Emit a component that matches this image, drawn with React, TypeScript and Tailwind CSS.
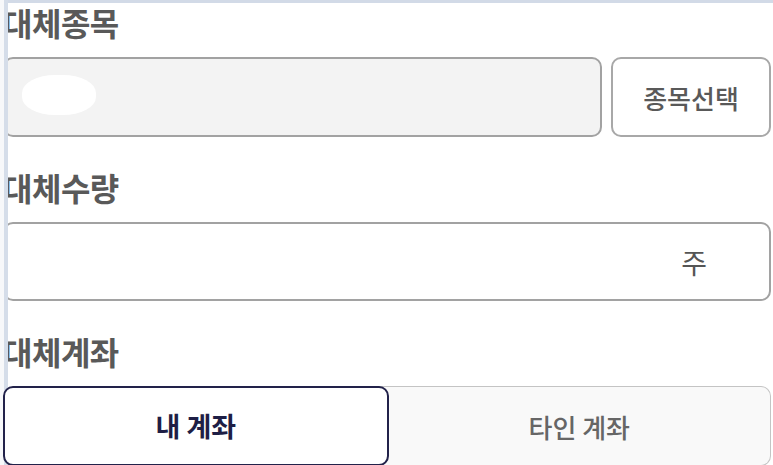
import { useState } from 'react'

const font = { fontFamily: '"Noto Sans CJK KR", "Noto Sans", sans-serif' }

function Heading({ children }: { children: string }) {
  return (
    <h2 className="h-[40px] pb-[4px] flex items-center text-[32px] font-bold leading-none text-[#595959] tracking-[-0.5px]">
      {children}
    </h2>
  )
}

export default function App() {
  const [mine, setMine] = useState(true)

  return (
    <div className="relative w-[773px] h-[465px] overflow-hidden bg-white" style={font}>
      <div className="pl-[3px] pr-[2px] pt-[4px]">
        <Heading>대체종목</Heading>
        <div className="mt-[13px] flex gap-[9px]">
          <div className="flex-1 h-[80px] flex items-center rounded-[10px] border-2 border-[#a2a2a2] bg-[#f3f3f3]">
            <div className="ml-[17px] mt-[-4px] w-[74px] h-[40px] rounded-[45%] bg-white" />
          </div>
          <button className="w-[160px] h-[80px] rounded-[10px] border-2 border-[#a8a8a8] bg-white text-[26px] font-medium text-[#595959]">
            종목선택
          </button>
        </div>

        <div className="mt-[32px]">
          <Heading>대체수량</Heading>
        </div>
        <div className="mt-[13px] h-[79px] flex items-center justify-end pr-[62px] rounded-[10px] border-2 border-[#a2a2a2] bg-white">
          <span className="text-[28px] text-[#555]">주</span>
        </div>

        <div className="mt-[32px]">
          <Heading>대체계좌</Heading>
        </div>
        <div className="mt-[13px] flex h-[80px]">
          <button
            onClick={() => setMine(true)}
            className={
              mine
                ? 'relative z-10 flex-1 rounded-[10px] border-2 border-[#22224a] bg-white text-[27px] font-bold text-[#1e1e45]'
                : 'relative flex-1 rounded-l-[10px] border-[1.5px] border-[#c4c4c4] bg-[#f9f9f9] text-[26px] font-medium text-[#666]'
            }
          >
            내 계좌
          </button>
          <button
            onClick={() => setMine(false)}
            className="flex-1 -ml-[12px] pl-[12px] rounded-r-[10px] border-[1.5px] border-l-0 border-[#c4c4c4] bg-[#f9f9f9] text-[26px] font-medium text-[#666]"
          >
            타인 계좌
          </button>
        </div>
      </div>

      <div className="absolute top-0 left-0 right-0 h-[3px] bg-[#d2dae7]" />
      <div className="absolute top-0 bottom-0 left-0 w-[4px] bg-[#f7f8fa]" />
      <div className="absolute top-0 bottom-0 left-[4px] w-[4px] bg-[#d5dde9]" />
    </div>
  )
}
